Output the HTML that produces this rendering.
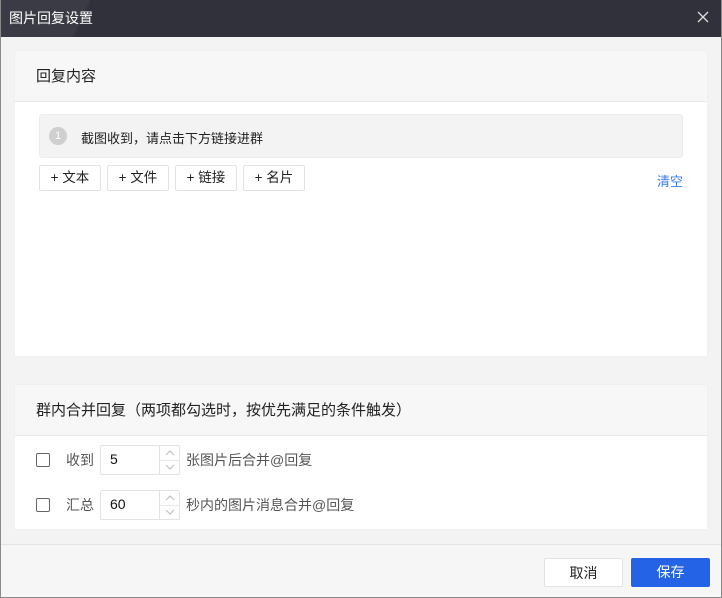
<!DOCTYPE html>
<html><head><meta charset="utf-8"><style>
*{box-sizing:border-box;margin:0;padding:0}
body{width:722px;height:598px;position:relative;overflow:hidden;background:#f3f3f3;font-family:"Liberation Sans","Noto Sans CJK SC",sans-serif;font-size:13px;color:#222;white-space:nowrap}
.frame{position:absolute;left:0;top:0;width:722px;height:598px;border:1px solid #8a8a8a;border-top:none}
.title{position:absolute;left:0;top:0;width:722px;height:37px;background:linear-gradient(115deg,#3a3b44 0,#3a3b44 12%,#30313b 12.5%,#30313b 100%);color:#fff;font-size:14px;line-height:36px;padding-left:9px}
.close{position:absolute;right:12px;top:10px;width:14px;height:14px}
.card{position:absolute;left:15px;width:692px;background:#fff;box-shadow:0 0 1px #e6e6e6}
.hd{height:51px;background:#f7f7f7;border-bottom:1px solid #e8e8e8;line-height:51px;padding-left:21px;font-size:15px;color:#222}
.item{position:absolute;left:24px;top:63px;width:644px;height:44px;background:#f3f3f3;border:1px solid #ebebeb;border-radius:3px}
.num{position:absolute;left:9px;top:12px;width:18px;height:18px;border-radius:50%;background:#cfcfcf;color:#fff;font-size:11px;text-align:center;line-height:18px}
.item span{position:absolute;left:41px;top:13px}
.btn{position:absolute;top:114px;height:26px;border:1px solid #e3e3e3;border-radius:2px;background:#fff;line-height:24px;text-align:center;width:62px;font-size:13.5px}
.clr{position:absolute;left:642px;top:120px;color:#3a7cf0}
.row{position:absolute;left:0;width:692px;height:30px;font-size:14px}
.cb{position:absolute;left:21px;top:8px;width:14px;height:14px;border:1px solid #666;border-radius:2px}
.lbl{position:absolute;left:51px;top:5px;color:#555}
.inp{position:absolute;left:85px;top:0;width:80px;height:30px;border:1px solid #e3e3e3;border-radius:2px}
.inp b{position:absolute;left:9px;top:5px;font-weight:normal;color:#111}
.sp{position:absolute;left:58px;top:0;width:21px;height:28px;border-left:1px solid #e3e3e3}
.sp svg{display:block}
.after{position:absolute;left:171px;top:5px;color:#555}
.footer{position:absolute;left:1px;top:544px;width:720px;height:53px;background:#f6f6f6;border-top:1px solid #e3e3e3}
.fb{position:absolute;top:13px;width:79px;height:29px;border-radius:2px;text-align:center;line-height:28px;font-size:14px}
</style></head><body>
<div class="title">图片回复设置
<svg class="close" viewBox="0 0 14 14"><path d="M2 2L12 12M12 2L2 12" stroke="#ddd" stroke-width="1.3"/></svg></div>
<div class="card" style="top:51px;height:305px">
<div class="hd">回复内容</div>
<div class="item"><div class="num">1</div><span>截图收到，请点击下方链接进群</span></div>
<div class="btn" style="left:24px">+ 文本</div>
<div class="btn" style="left:92px">+ 文件</div>
<div class="btn" style="left:160px">+ 链接</div>
<div class="btn" style="left:228px">+ 名片</div>
<div class="clr">清空</div>
</div>
<div class="card" style="top:385px;height:144px">
<div class="hd">群内合并回复（两项都勾选时，按优先满足的条件触发）</div>
<div class="row" style="top:60px">
<div class="cb"></div><div class="lbl">收到</div>
<div class="inp"><b>5</b><div class="sp"><svg width="20" height="28" viewBox="0 0 20 28"><path d="M6 9L10 5L14 9" fill="none" stroke="#bbb"/><path d="M0 14.5H20" stroke="#e8e8e8"/><path d="M6 19L10 23L14 19" fill="none" stroke="#bbb"/></svg></div></div>
<div class="after">张图片后合并@回复</div></div>
<div class="row" style="top:105px">
<div class="cb"></div><div class="lbl">汇总</div>
<div class="inp"><b>60</b><div class="sp"><svg width="20" height="28" viewBox="0 0 20 28"><path d="M6 9L10 5L14 9" fill="none" stroke="#bbb"/><path d="M0 14.5H20" stroke="#e8e8e8"/><path d="M6 19L10 23L14 19" fill="none" stroke="#bbb"/></svg></div></div>
<div class="after">秒内的图片消息合并@回复</div></div>
</div>
<div class="footer">
<div class="fb" style="left:543px;background:#fff;border:1px solid #e3e3e3">取消</div>
<div class="fb" style="left:630px;background:#2563e6;color:#fff">保存</div>
</div>
<div class="frame"></div>
</body></html>
